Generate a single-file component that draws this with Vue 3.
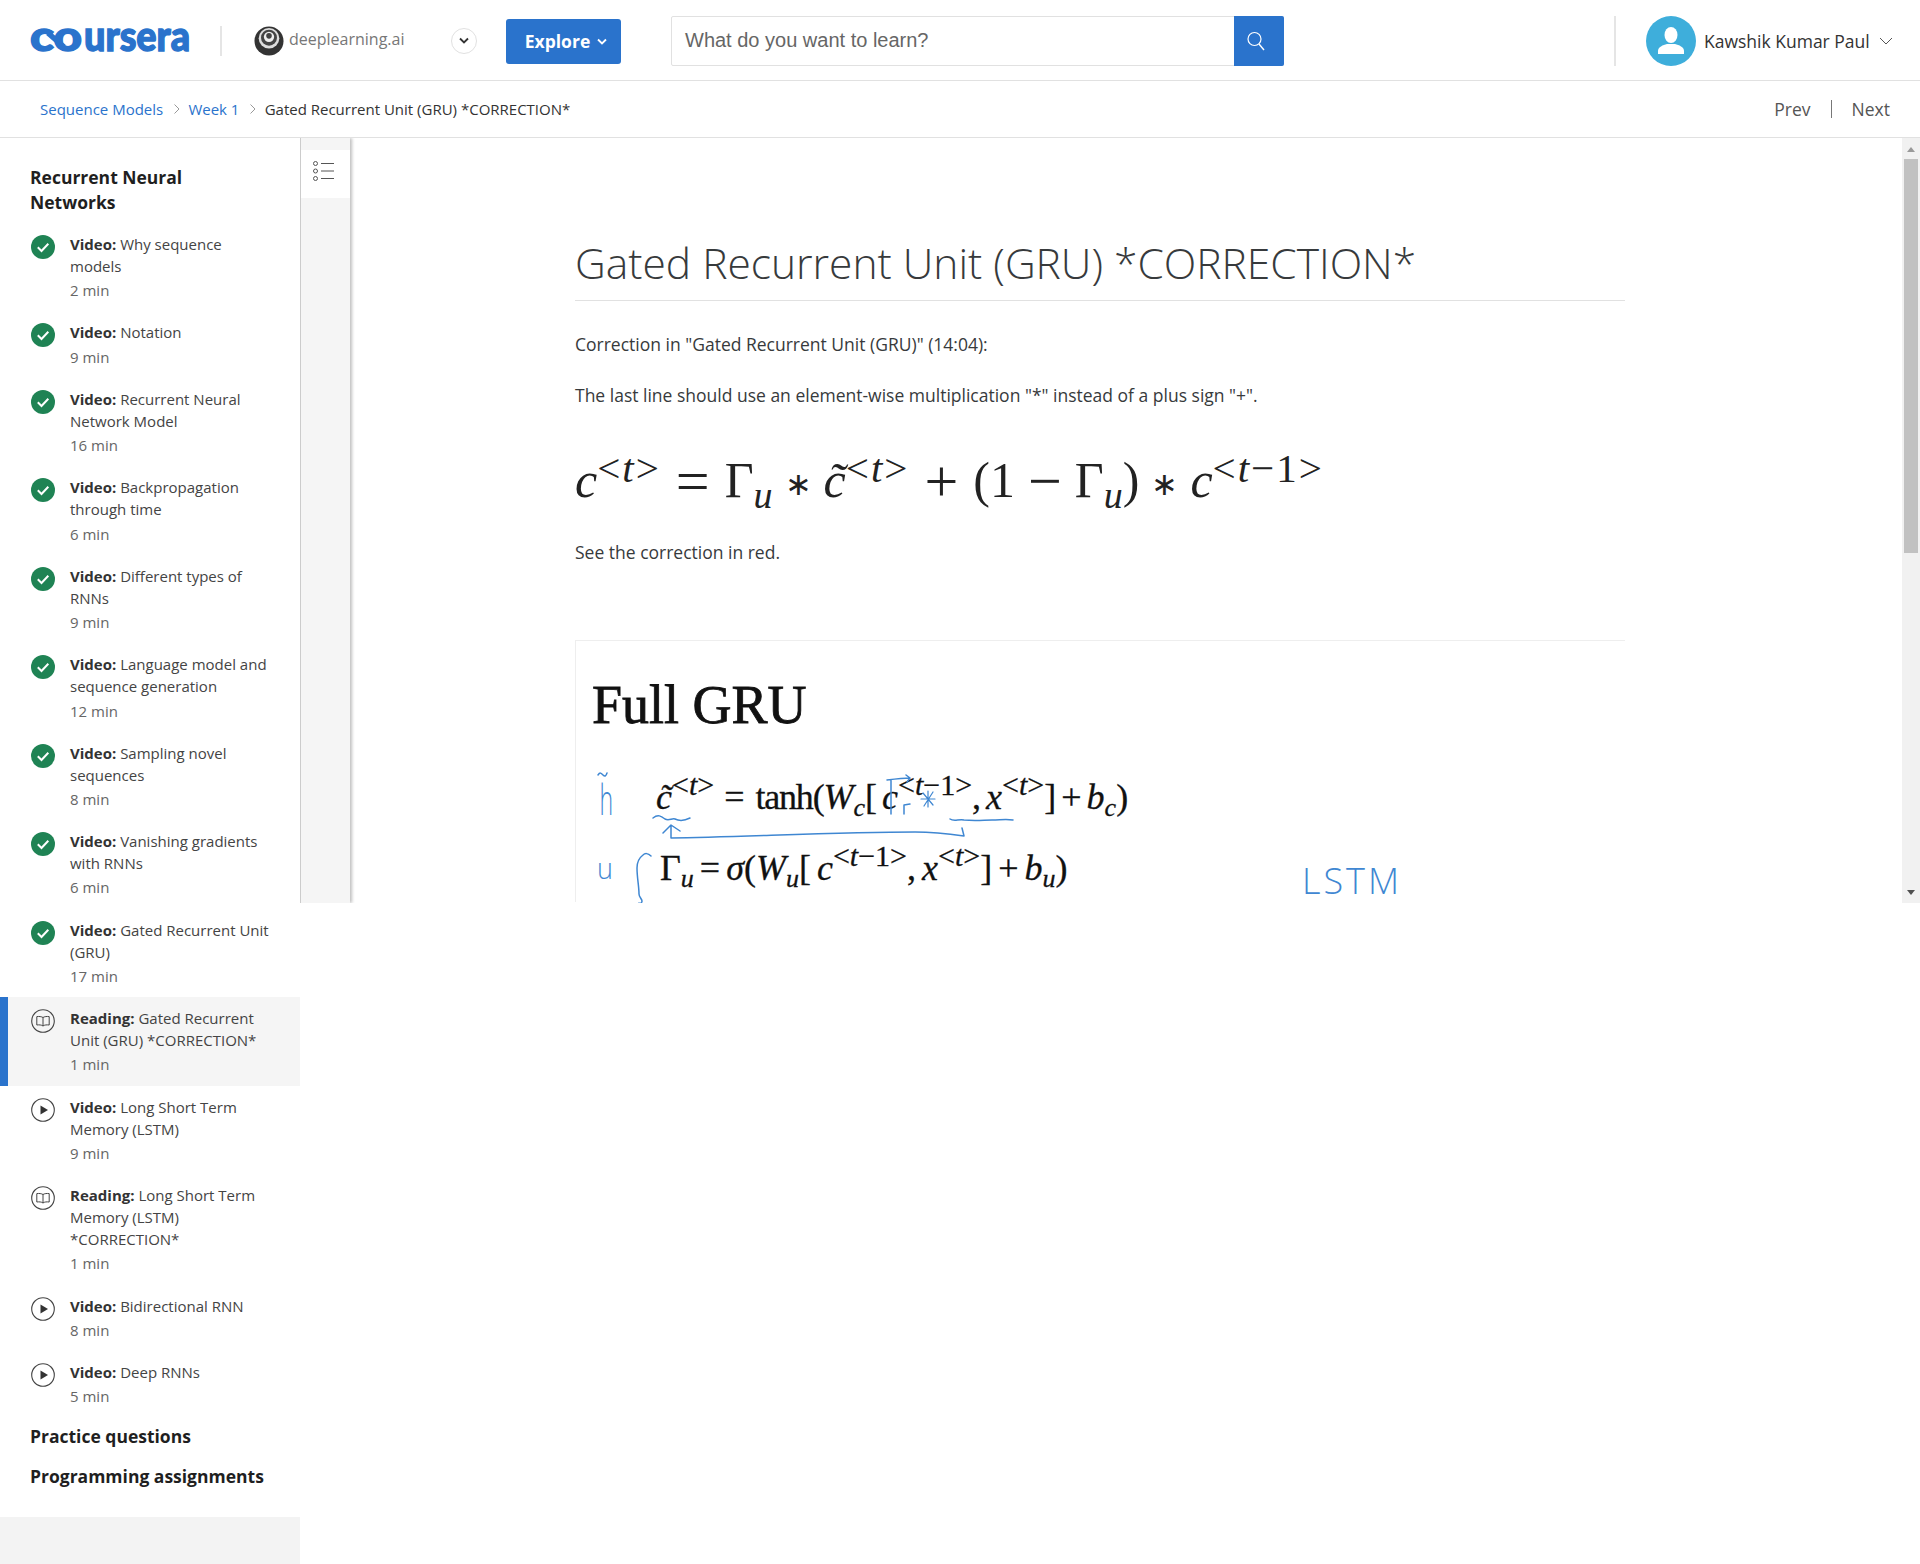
<script setup>
const lessons = [
  { state: 'done', kind: 'Video', name: 'Why sequence models', min: 2 },
  { state: 'done', kind: 'Video', name: 'Notation', min: 9 },
  { state: 'done', kind: 'Video', name: 'Recurrent Neural Network Model', min: 16 },
  { state: 'done', kind: 'Video', name: 'Backpropagation through time', min: 6 },
  { state: 'done', kind: 'Video', name: 'Different types of RNNs', min: 9 },
  { state: 'done', kind: 'Video', name: 'Language model and sequence generation', min: 12 },
  { state: 'done', kind: 'Video', name: 'Sampling novel sequences', min: 8 },
  { state: 'done', kind: 'Video', name: 'Vanishing gradients with RNNs', min: 6 },
  { state: 'done', kind: 'Video', name: 'Gated Recurrent Unit (GRU)', min: 17 },
  { state: 'book', kind: 'Reading', name: 'Gated Recurrent Unit (GRU) *CORRECTION*', min: 1, active: true },
  { state: 'play', kind: 'Video', name: 'Long Short Term Memory (LSTM)', min: 9 },
  { state: 'book', kind: 'Reading', name: 'Long Short Term Memory (LSTM) *CORRECTION*', min: 1 },
  { state: 'play', kind: 'Video', name: 'Bidirectional RNN', min: 8 },
  { state: 'play', kind: 'Video', name: 'Deep RNNs', min: 5 },
]
</script>

<template>
  <div class="page">
    <header class="topbar">
      <svg class="logo" width="160" height="30" viewBox="0 0 160 30">
        <path d="M18 7 34 21" stroke="#2a73cc" stroke-width="5.500" />
        <text y="25" class="logo-text"><tspan x="0" textLength="52" lengthAdjust="spacingAndGlyphs">co</tspan><tspan x="54" textLength="106" lengthAdjust="spacingAndGlyphs">ursera</tspan></text>
      </svg>
      <span class="rule small"></span>
      <svg class="dl-mark" width="30" height="30" viewBox="0 0 32 32">
        <circle cx="16" cy="16" r="15.500" fill="#333" />
        <circle cx="16" cy="13" r="11" fill="#ddd" />
        <circle cx="16" cy="12.500" r="8.500" fill="#444" />
        <circle cx="16" cy="11.500" r="5.500" fill="#eee" />
        <circle cx="16" cy="10.500" r="3" fill="#444" />
      </svg>
      <span class="dl-text">deeplearning.ai</span>
      <button class="round">
        <svg width="12" height="8" viewBox="0 0 12 8"><path d="M2 1.500 6 5.500 10 1.500" fill="none" stroke="#333" stroke-width="1.800" /></svg>
      </button>
      <button class="explore">
        Explore
        <svg width="10" height="7" viewBox="0 0 10 7"><path d="M1 1.500 5 5.500 9 1.500" fill="none" stroke="#fff" stroke-width="1.800" /></svg>
      </button>
      <div class="search">
        <span class="placeholder">What do you want to learn?</span>
        <span class="search-btn">
          <svg width="22" height="22" viewBox="0 0 22 22"><circle cx="9.500" cy="9" r="6.500" fill="none" stroke="#fff" stroke-width="1.200" /><path d="M14 14 19 20" stroke="#fff" stroke-width="1.400" /></svg>
        </span>
      </div>
      <span class="rule tall"></span>
      <svg class="avatar" width="50" height="50" viewBox="0 0 50 50">
        <circle cx="25" cy="25" r="25" fill="#3eaedb" />
        <ellipse cx="25" cy="19" rx="6.500" ry="8" fill="#fff" />
        <path d="M12 38v-3c0-4 5-6 9-7h8c4 1 9 3 9 7v3z" fill="#fff" />
      </svg>
      <span class="user">Kawshik Kumar Paul</span>
      <svg class="user-caret" width="14" height="8" viewBox="0 0 14 8"><path d="M1 1 7 7 13 1" fill="none" stroke="#555" stroke-width="1" /></svg>
    </header>

    <nav class="crumbs">
      <a>Sequence Models</a>
      <svg width="8" height="12" viewBox="0 0 8 12"><path d="M1.500 1.500 6 6 1.500 10.500" fill="none" stroke="#999" /></svg>
      <a>Week 1</a>
      <svg width="8" height="12" viewBox="0 0 8 12"><path d="M1.500 1.500 6 6 1.500 10.500" fill="none" stroke="#999" /></svg>
      <span class="current">Gated Recurrent Unit (GRU) *CORRECTION*</span>
      <span class="pager">
        <span>Prev</span><i></i><span>Next</span>
      </span>
    </nav>

    <div class="main">
      <aside class="side">
        <h3 class="week">Recurrent Neural Networks</h3>
        <ul class="list">
          <li v-for="l in lessons" :key="l.kind + l.name" class="item" :class="{ active: l.active }">
            <span class="ico">
              <svg v-if="l.state === 'done'" width="24" height="24" viewBox="0 0 24 24">
                <circle cx="12" cy="12" r="12" fill="#1f8354" />
                <path d="M6.800 12.300 10.500 16 17.300 8.800" fill="none" stroke="#fff" stroke-width="2" />
              </svg>
              <svg v-else-if="l.state === 'play'" width="24" height="24" viewBox="0 0 24 24">
                <circle cx="12" cy="12" r="11.300" fill="none" stroke="#444" stroke-width="1.100" />
                <path d="M9.500 7.500 17 12 9.500 16.500z" fill="#333" />
              </svg>
              <svg v-else width="24" height="24" viewBox="0 0 24 24">
                <circle cx="12" cy="12" r="11.300" fill="none" stroke="#444" stroke-width="1.100" />
                <path d="M12 8.500C10.500 7.500 8 7.300 5.800 7.600V16C8 15.700 10.500 15.800 12 17 13.500 15.800 16 15.700 18.200 16V7.600C16 7.300 13.500 7.500 12 8.500ZM12 8.500V17" fill="none" stroke="#444" stroke-width="1" />
              </svg>
            </span>
            <div class="body">
              <div class="title"><b>{{ l.kind }}:</b> {{ l.name }}</div>
              <div class="min">{{ l.min }} min</div>
            </div>
          </li>
        </ul>
        <h4 class="sect first">Practice questions</h4>
        <h4 class="sect">Programming assignments</h4>
        <div class="side-foot"></div>
      </aside>

      <div class="pane">
        <div class="strip">
          <div class="toggle">
            <svg width="22" height="20" viewBox="0 0 22 20">
              <circle cx="2.500" cy="2.500" r="2" fill="none" stroke="#555" />
              <circle cx="2.500" cy="10" r="2" fill="none" stroke="#555" />
              <circle cx="2.500" cy="17.500" r="2" fill="none" stroke="#555" />
              <path d="M8 2.500H21M8 10H21M8 17.500H21" stroke="#555" />
            </svg>
          </div>
        </div>
        <main class="content">
          <article class="doc">
            <h1 class="doc-title">Gated Recurrent Unit (GRU) *CORRECTION*</h1>
            <p class="p1">Correction in "Gated Recurrent Unit (GRU)" (14:04):</p>
            <p class="p2">The last line should use an element-wise multiplication "*" instead of a plus sign "+".</p>
            <div class="eq">
              <i>c</i><span class="up">&lt;<i>t</i>&gt;</span><span class="rel">=</span>Γ<i class="dn">u</i><span class="op">∗</span><i>c̃</i><span class="up">&lt;<i>t</i>&gt;</span><span class="rel">+</span>(1<span class="rel tight">−</span>Γ<i class="dn">u</i>)<span class="op">∗</span><i>c</i><span class="up">&lt;<i>t</i>−1&gt;</span>
            </div>
            <p class="p3">See the correction in red.</p>
            <figure class="fig">
              <div class="fig-title">Full GRU</div>
              <div class="slide l1">
                <i>c̃</i><span class="up2">&lt;<i>t</i>&gt;</span><span class="eqs">=</span><span class="fn">tanh(</span><i>W</i><i class="dn2">c</i>[ <i>c</i><span class="up2">&lt;<i>t</i>−1&gt;</span>, <i>x</i><span class="up2">&lt;<i>t</i>&gt;</span>] + <i>b</i><i class="dn2">c</i>)
              </div>
              <div class="slide l2">
                Γ<i class="dn2">u</i> = <i>σ</i>(<i>W</i><i class="dn2">u</i>[ <i>c</i><span class="up2">&lt;<i>t</i>−1&gt;</span>, <i>x</i><span class="up2">&lt;<i>t</i>&gt;</span>] + <i>b</i><i class="dn2">u</i>)
              </div>
              <span class="hand h-h">h</span>
              <span class="hand h-u">u</span>
              <span class="hand h-l">LSTM</span>
              <svg class="ink" width="1050" height="262" viewBox="0 0 1050 262">
                <g fill="none" stroke="#3f87d2" stroke-width="1.500" stroke-linecap="round" stroke-linejoin="round">
                  <path d="M22 134c2-3 3-2 5 0s3 1 4-2" />
                  <path d="M77 177c5-4 8-2 12 1 4 2 7-1 10 0 4 2 9 2 15-1" />
                  <path d="M315 139v34M311 139c8-1 16-2 23-2M330 134l4 3-3 4M328 173v-9l6-1" />
                  <path d="M345 158h14M347 152l10 12M357 151l-9 14M352 150v16" stroke-width="1.200" />
                  <path d="M374 178c4 3 8 0 14 1 12 1 20 0 28 0 8 0 14-1 21 0" />
                  <path d="M87 192 95 184 104 190M95 185v12c70-1 170-6 244-6 20 0 35 2 49 4l-2-8" />
                  <path d="M75 215c-3-3-6-3-8-1-4 3-6 7-6 13 0 10 2 18 2 26 0 3 3 5 3 7 0 2-2 3-3 2" />
                </g>
              </svg>
            </figure>
          </article>
          <div class="scrollbar">
            <span class="arrow up-a"></span>
            <span class="thumb"></span>
            <span class="arrow down-a"></span>
          </div>
        </main>
      </div>
    </div>
  </div>
</template>

<style scoped>
.page { width: 1920px; height: 1564px; overflow: hidden; background: #fff; font-family: "Open Sans", sans-serif; color: #373a3c; position: relative; }

.topbar { height: 78px; padding-top: 2px; display: flex; align-items: center; border-bottom: 1px solid #e1e1e1; }
.logo { margin-left: 30px; flex: none; overflow: visible; }
.logo-text { font-family: Lato, sans-serif; font-weight: 900; font-size: 42px; fill: #2a73cc; stroke: #2a73cc; stroke-width: 1.400px; }
.rule { background: #e5e5e5; flex: none; width: 2px; }
.rule.small { height: 30px; margin-left: 30px; }
.dl-mark { margin-left: 32px; flex: none; margin-top: -1px; }
.dl-text { margin-left: 5px; font-size: 16px; color: #777; margin-top: -5px; width: 116px; white-space: nowrap; }
.round { margin-left: 46px; width: 26px; height: 26px; border-radius: 50%; border: 1px solid #e1e1e1; background: #fff; padding: 0; display: flex; align-items: center; justify-content: center; }
.explore { margin-left: 29px; width: 115px; height: 45px; background: #2a73cc; border: 0; border-radius: 3px; color: #fff; font: 700 17.500px "Open Sans", sans-serif; display: flex; align-items: center; justify-content: center; gap: 7px; padding: 0 0 0 5px; }
.search { margin-left: 50px; width: 613px; height: 50px; box-sizing: border-box; border: 1px solid #e1e1e1; border-radius: 2px; display: flex; align-items: stretch; }
.placeholder { flex: 1; font: 20px "Liberation Sans", sans-serif; color: #666; line-height: 46px; padding-left: 13px; }
.search-btn { width: 50px; margin: -1px; padding-right: 6px; box-sizing: border-box; background: #2a73cc; display: flex; align-items: center; justify-content: center; border-radius: 0 2px 2px 0; }
.rule.tall { height: 50px; margin-left: 330px; }
.avatar { margin-left: 30px; flex: none; }
.user { margin-left: 8px; font-size: 17.500px; color: #333; white-space: nowrap; }
.user-caret { margin-left: 9px; flex: none; }

.crumbs { height: 56px; display: flex; align-items: center; border-bottom: 1px solid #e1e1e1; padding: 0 30px 0 40px; font-size: 15px; }
.crumbs a { color: #2a73cc; }
.crumbs svg { margin: 0 7.700px 0 9.500px; }
.current { color: #333; }
.pager { margin-left: auto; display: flex; align-items: center; font-size: 17.500px; color: #555; }
.pager i { width: 1px; height: 18px; background: #777; margin: 0 20px; }

.main { display: flex; align-items: flex-start; }
.side { width: 300px; flex: none; }
.week { margin: 0; padding: 27px 70px 0 30px; font-size: 17.500px; line-height: 25px; font-weight: 700; color: #1f1f1f; }
.list { list-style: none; margin: 8px 0 0; padding: 0; }
.item { display: flex; padding: 10px 24px 10px 30px; position: relative; }
.item.active { background: #f5f5f5; box-shadow: inset 8px 0 0 #2a73cc; }
.ico { width: 24px; height: 24px; flex: none; margin: 2px 0 0 .5px; }
.ico svg { display: block; }
.body { margin-left: 15.500px; font-size: 15px; line-height: 22.150px; }
.title { color: #444; }
.title b { font-weight: 700; color: #333; }
.min { color: #666; margin-top: 2px; }
.sect { margin: 0; padding-left: 30px; font-size: 17.500px; line-height: 25px; font-weight: 700; color: #1f1f1f; }
.sect.first { margin-top: 7px; }
.sect + .sect { margin-top: 15px; }
.side-foot { margin-top: 28px; height: 60px; background: #f3f3f3; }

.pane { flex: 1; height: 765px; display: flex; overflow: hidden; }
.strip { width: 50px; flex: none; box-sizing: border-box; background: #f5f5f5; border-left: 1px solid #ccc; padding-top: 12px; box-shadow: 2px 0 3px rgba(0,0,0,.25); position: relative; }
.toggle { height: 48px; box-sizing: border-box; padding: 0 3px 6px 0; background: #fff; display: flex; align-items: center; justify-content: center; }
.content { flex: 1; display: flex; min-width: 0; }
.doc { flex: 1; padding: 0 0 0 225px; min-width: 0; overflow: hidden; }
.doc-title { margin: 0; padding: 97px 0 9px; width: 1050px; border-bottom: 1px solid #e1e1e1; font-size: 42.500px; line-height: 56px; font-weight: 300; color: #373a3c; white-space: nowrap; }
.doc p { margin: 0; font-size: 17.500px; line-height: 24px; color: #373a3c; }
.p1 { padding-top: 31px; }
.p2 { padding-top: 27px; }
.eq { margin-top: 28px; height: 90px; font: 50px/90px "Liberation Serif", serif; color: #222; white-space: nowrap; }
.up { font-size: 41px; letter-spacing: 2px; vertical-align: 15px; line-height: 0; }
.dn { font-size: 38px; vertical-align: -11px; line-height: 0; }
.rel { padding: 0 15px; font-size: 60px; line-height: 0; vertical-align: -4px; }
.rel.tight { padding: 0 13px; }
.op { padding: 0 12px; font-size: 32px; line-height: 0; vertical-align: 2px; }
.p3 { padding-top: 15px; }
.fig { margin: 76px 0 0; width: 1050px; height: 262px; box-sizing: border-box; border-top: 1px solid #eee; border-left: 1px solid #eee; position: relative; padding-left: 16px; }
.fig-title { font: 400 54px/62px "Liberation Serif", serif; -webkit-text-stroke: .8px #111; color: #111; padding-top: 33px; }
.slide { font: 36px/44px "Liberation Serif", serif; -webkit-text-stroke: .3px #111; word-spacing: -3px; color: #111; white-space: nowrap; }
.l1 { margin-top: 39px; padding-left: 64px; word-spacing: -4px; }
.l2 { margin-top: 27px; padding-left: 68px; }
.eqs { padding: 0 11px 0 10px; }
.fn { letter-spacing: -1.200px; }
.up2 { font-size: 30px; vertical-align: 14px; line-height: 0; }
.dn2 { font-size: 26px; vertical-align: -7px; line-height: 0; }
.hand { position: absolute; color: #3f87d2; font-family: "Open Sans", sans-serif; font-weight: 300; line-height: 1; }
.h-h { left: 18px; top: 137px; font-size: 42px; transform: scaleX(.55); }
.h-u { left: 20px; top: 212px; font-size: 30px; transform: scaleX(.9); }
.h-l { left: 726px; top: 222px; font-size: 36px; letter-spacing: 3px; }
.ink { position: absolute; left: 0; top: 0; overflow: visible; }

.scrollbar { width: 18px; flex: none; background: #f1f1f1; position: relative; }
.thumb { position: absolute; left: 2px; right: 2px; top: 21px; height: 394px; background: #c1c1c1; }
.arrow { position: absolute; left: 5px; width: 0; height: 0; border-left: 4px solid transparent; border-right: 4px solid transparent; }
.up-a { top: 9px; border-bottom: 5px solid #999; }
.down-a { bottom: 8px; border-top: 5px solid #505050; }
</style>

<style>
html, body { margin: 0; background: #fff; }
</style>
